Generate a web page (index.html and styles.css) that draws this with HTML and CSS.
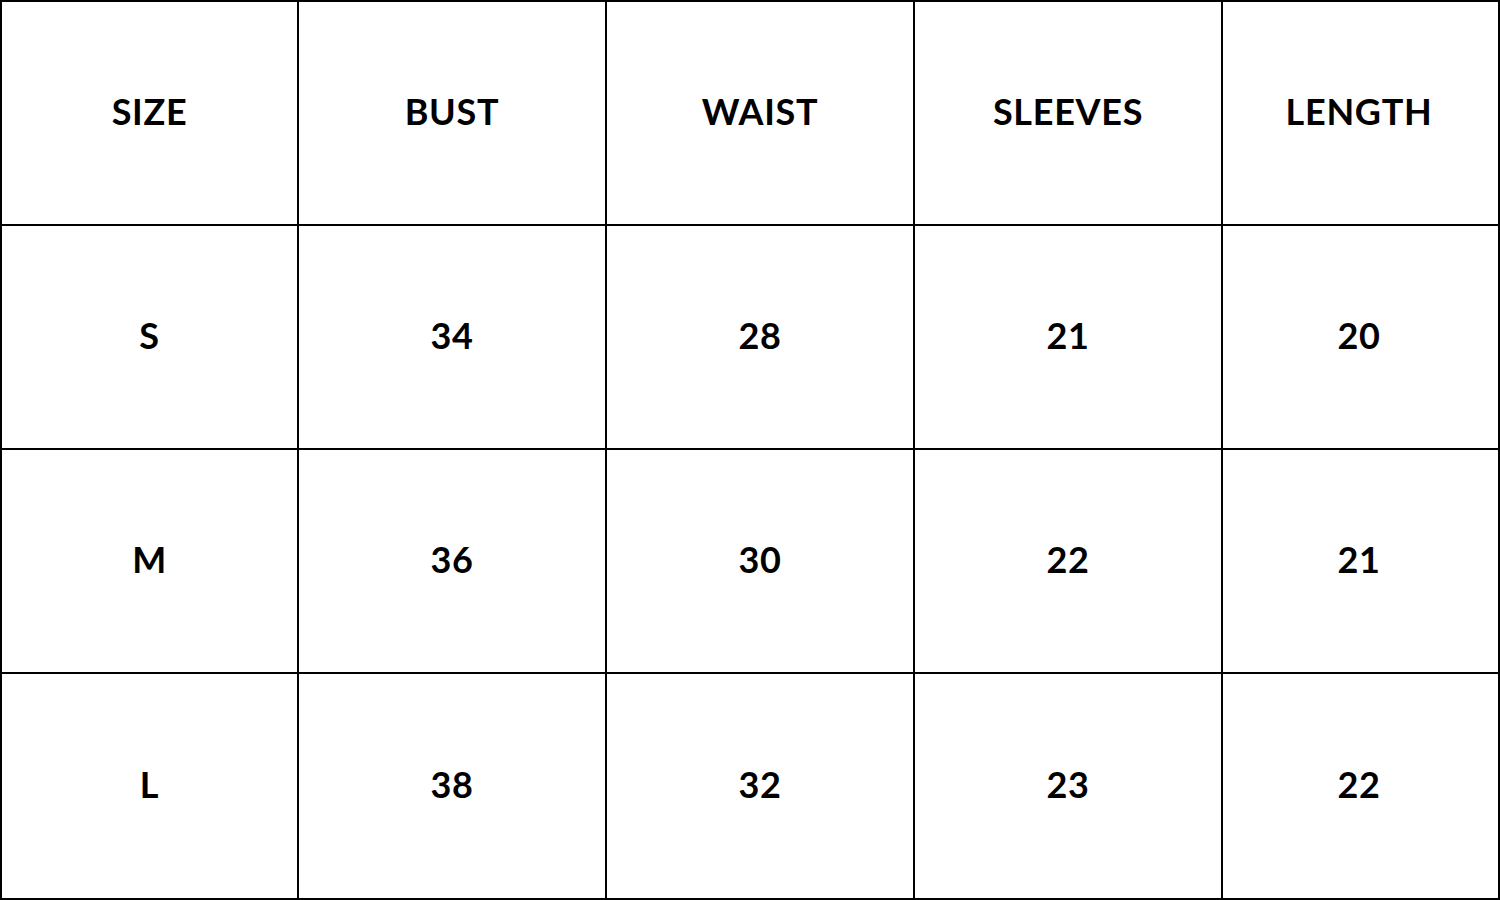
FILE: index.html
```html
<!DOCTYPE html>
<html>
<head>
<meta charset="utf-8">
<link rel="stylesheet" href="styles.css">
</head>
<body>
<div class="chart">
  <div class="cell">SIZE</div>
  <div class="cell">BUST</div>
  <div class="cell">WAIST</div>
  <div class="cell">SLEEVES</div>
  <div class="cell">LENGTH</div>
  <div class="cell">S</div>
  <div class="cell">34</div>
  <div class="cell">28</div>
  <div class="cell">21</div>
  <div class="cell">20</div>
  <div class="cell">M</div>
  <div class="cell">36</div>
  <div class="cell">30</div>
  <div class="cell">22</div>
  <div class="cell">21</div>
  <div class="cell">L</div>
  <div class="cell">38</div>
  <div class="cell">32</div>
  <div class="cell">23</div>
  <div class="cell">22</div>
</div>
</body>
</html>
```
FILE: styles.css
```css
html, body {
  margin: 0;
  padding: 0;
  background: #fff;
}
.chart {
  box-sizing: border-box;
  width: 1500px;
  height: 900px;
  background: #000;
  padding: 2px;
  display: grid;
  grid-template-columns: 295px 306px 306px 306px 275px;
  grid-template-rows: 222px 222px 222px 224px;
  gap: 2px;
}
.cell {
  background: #fff;
  display: flex;
  align-items: center;
  justify-content: center;
  padding-bottom: 5px;
  font-family: "Lato", "Liberation Sans", sans-serif;
  font-weight: 700;
  font-size: 36px;
  letter-spacing: 0.7px;
  color: #000;
}
.cell:nth-child(5n) {
  padding-right: 3px;
}
```
